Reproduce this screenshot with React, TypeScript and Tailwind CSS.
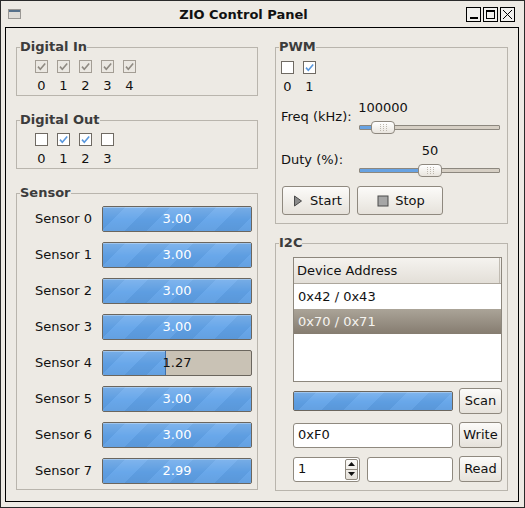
import React from "react";

const STRIPES =
  "bg-[linear-gradient(to_bottom,rgba(255,255,255,0.16),rgba(255,255,255,0)_55%,rgba(0,0,0,0.04)),repeating-linear-gradient(135deg,#5d9de1_0px,#5d9de1_16px,#68a7ea_16px,#68a7ea_32px)]";

function Check({ checked, disabled }: { checked?: boolean; disabled?: boolean }) {
  return (
    <span
      className={`flex h-[13px] w-[13px] items-center justify-center border ${
        disabled ? "border-[#a39d94] bg-[#ebe8e2]" : "border-[#6f6a63] bg-white"
      }`}
    >
      {checked && (
        <svg width="11" height="11" viewBox="0 0 11 11">
          <path
            d="M2 5.6 L4.3 8.2 L9.2 2.4"
            fill="none"
            stroke={disabled ? "#8f8a82" : "#5a98dd"}
            strokeWidth="1.6"
          />
        </svg>
      )}
    </span>
  );
}

function Group({ title, children, className = "" }: { title: string; children: React.ReactNode; className?: string }) {
  return (
    <fieldset className={`border border-[#b9b5ad] ${className}`}>
      <legend className="ml-[3px] text-[13px] font-bold leading-[16px] text-[#3c3c3c]">{title}</legend>
      {children}
    </fieldset>
  );
}

function Bits({ states, disabled }: { states: boolean[]; disabled?: boolean }) {
  return (
    <div className="flex gap-[9px]">
      {states.map((s, i) => (
        <div key={i} className="flex w-[13px] flex-col items-center">
          <Check checked={s} disabled={disabled} />
          <span className="mt-[5px] leading-[16px]">{i}</span>
        </div>
      ))}
    </div>
  );
}

function Bar({ value, max = 3, text = true, className = "" }: { value: number; max?: number; text?: boolean; className?: string }) {
  const pct = Math.min(1, value / max);
  const partial = pct < 0.99;
  return (
    <div
      className={`relative flex items-center justify-center overflow-hidden rounded-[2px] border border-[#6b665e] bg-[#c9c2b5] ${className}`}
    >
      <div
        className={`absolute inset-y-0 left-0 shadow-[inset_0_1px_0_rgba(255,255,255,0.3)] ${STRIPES} ${
          partial ? "border-r border-[#3f6fa8]" : ""
        }`}
        style={{ width: `${pct * 100}%` }}
      />
      {text && (
        <span className={`relative ${pct > 0.6 ? "text-white" : "text-[#111]"}`}>{value.toFixed(2)}</span>
      )}
    </div>
  );
}

function Grip() {
  const dots = [];
  for (let r = 0; r < 4; r++)
    for (let c = 0; c < 3; c++) dots.push(<rect key={`${r}-${c}`} x={c * 3} y={r * 2} width="1" height="1" fill="#bdb7ad" />);
  return (
    <svg width="7" height="7" viewBox="0 0 7 7">
      {dots}
    </svg>
  );
}

function Slider({ value, min, max }: { value: number; min: number; max: number }) {
  const f = (value - min) / (max - min);
  const left = Math.round(f * (141 - 24));
  return (
    <div className="flex flex-col">
      <div className="relative h-[16px]">
        <span className="absolute top-0 -translate-x-1/2 whitespace-nowrap" style={{ left: left + 12 }}>
          {value}
        </span>
      </div>
      <div className="relative mt-[5px] flex h-[13px] items-center">
        <div className="h-[5px] w-full overflow-hidden rounded-[1px] border border-[#8c877e] bg-[#d6cfc4]">
          <div className="h-full border-r border-[#3f6fa8] bg-[#67a2e2]" style={{ width: left + 12 }} />
        </div>
        <div
          className="absolute top-0 flex h-[13px] w-[24px] items-center justify-center rounded-[4px] border border-[#8e887f] bg-[linear-gradient(to_bottom,#ffffff,#e9e5de)]"
          style={{ left }}
        >
          <Grip />
        </div>
      </div>
    </div>
  );
}

function Btn({ children, className = "" }: { children: React.ReactNode; className?: string }) {
  return (
    <button
      className={`flex items-center justify-center rounded-[3px] border border-[#8f897f] bg-[linear-gradient(to_bottom,#fcfbf9,#e6e2db)] text-[13px] leading-[16px] text-[#111] ${className}`}
    >
      {children}
    </button>
  );
}

function TitleBar() {
  return (
    <div className="flex h-[26px] shrink-0 items-center pl-[7px] pr-[9px]">
      <svg width="13" height="10" viewBox="0 0 13 10" className="shrink-0">
        <rect x="0.5" y="0.5" width="12" height="9" fill="#dedbd6" stroke="#9a9894" />
        <rect x="1" y="1" width="11" height="2" fill="#56708a" />
      </svg>
      <div className="flex-1 pt-[2px] text-center text-[13px] font-bold leading-[16px] text-[#111]">ZIO Control Panel</div>
      <div className="flex gap-[2px]">
        <span className="flex h-[15px] w-[15px] items-end justify-center border border-black bg-[#f2f1ee] pb-[2px]">
          <span className="h-[2px] w-[8px] bg-black" />
        </span>
        <span className="flex h-[15px] w-[15px] items-center justify-center border border-black bg-[#f2f1ee]">
          <span className="h-[9px] w-[9px] border border-t-2 border-black" />
        </span>
        <span className="flex h-[15px] w-[15px] items-center justify-center border border-black bg-[#f2f1ee]">
          <svg width="11" height="11" viewBox="0 0 11 11">
            <path d="M1 1 L10 10 M10 1 L1 10" stroke="#000" strokeWidth="1" />
          </svg>
        </span>
      </div>
    </div>
  );
}

export default function App() {
  const sensors = [3.0, 3.0, 3.0, 3.0, 1.27, 3.0, 3.0, 2.99];
  return (
    <div className="flex h-[508px] w-[525px] flex-col border border-[#2a2a2a] bg-[#edeae4] font-['DejaVu_Sans','Liberation_Sans',sans-serif] text-[13px] leading-[16px] text-[#111]">
      <TitleBar />
      <div className="mb-[5px] ml-[4px] mr-[5px] flex flex-1 gap-[17px] border border-black px-[10px] pt-[11px]">
        {/* left column */}
        <div className="flex w-[242px] flex-col gap-[16px]">
          <Group title="Digital In">
            <div className="pb-[1px] pl-[18px] pt-[5px]">
              <Bits states={[true, true, true, true, true]} disabled />
            </div>
          </Group>
          <Group title="Digital Out">
            <div className="pb-[1px] pl-[18px] pt-[5px]">
              <Bits states={[false, true, true, false]} />
            </div>
          </Group>
          <Group title="Sensor">
            <div className="flex flex-col gap-[10px] pb-[5px] pl-[18px] pr-[5px] pt-[5px]">
              {sensors.map((v, i) => (
                <div key={i} className="flex items-center">
                  <span className="w-[67px]">Sensor {i}</span>
                  <Bar value={v} className="h-[26px] flex-1" />
                </div>
              ))}
            </div>
          </Group>
        </div>

        {/* right column */}
        <div className="flex w-[233px] flex-col gap-[11px]">
          <Group title="PWM">
            <div className="flex flex-col pb-[8px] pl-[5px] pr-[7px] pt-[6px]">
              <div className="flex gap-[9px]">
                {[false, true].map((s, i) => (
                  <div key={i} className="flex w-[13px] flex-col items-center">
                    <Check checked={s} />
                    <span className="mt-[5px] leading-[16px]">{i}</span>
                  </div>
                ))}
              </div>
              <div className="mt-[5px] grid grid-cols-[78px_141px] items-center gap-y-[9px]">
                <span>Freq (kHz):</span>
                <Slider value={100000} min={0} max={1000000} />
                <span>Duty (%):</span>
                <Slider value={50} min={0} max={100} />
              </div>
              <div className="ml-[1px] mt-[9px] flex gap-[7px]">
                <Btn className="h-[29px] w-[68px] gap-[4px]">
                  <svg width="16" height="16" viewBox="0 0 16 16">
                    <polygon points="4.5,3 11.5,8 4.5,13" fill="#8a8a8a" stroke="#4a4a4a" strokeWidth="1" />
                  </svg>
                  Start
                </Btn>
                <Btn className="h-[29px] w-[86px] gap-[4px]">
                  <svg width="16" height="16" viewBox="0 0 16 16">
                    <rect x="3" y="3" width="10" height="10" fill="#a6a6a6" stroke="#4a4a4a" strokeWidth="1" />
                  </svg>
                  Stop
                </Btn>
              </div>
            </div>
          </Group>

          <Group title="I2C">
            <div className="flex flex-col gap-[8px] pb-[8px] pl-[17px] pr-[5px] pt-[6px]">
              <div className="mb-[-2px] flex h-[125px] flex-col border border-[#8d877d] bg-white">
                <div className="flex h-[26px] shrink-0 border-b border-[#aca69c] bg-[linear-gradient(to_bottom,#f5f3ef,#e3dfd8)]">
                  <span className="mr-[1px] flex flex-1 items-center border-r border-[#c0bbb2] pl-[3px]">Device Address</span>
                </div>
                <div className="flex h-[25px] shrink-0 items-center pl-[4px]">0x42 / 0x43</div>
                <div className="flex h-[25px] shrink-0 items-center bg-[linear-gradient(to_bottom,#aba498,#857c70)] pl-[4px] text-[#f6f4f0]">
                  0x70 / 0x71
                </div>
              </div>
              <div className="flex h-[26px] items-center gap-[6px]">
                <Bar value={3} text={false} className="h-[20px] w-[160px]" />
                <Btn className="h-[26px] w-[43px]">Scan</Btn>
              </div>
              <div className="flex h-[26px] items-center gap-[6px]">
                <div className="flex h-[25px] w-[160px] items-center rounded-[3px] border border-[#8f897f] bg-white pl-[4px]">0xF0</div>
                <Btn className="h-[26px] w-[43px]">Write</Btn>
              </div>
              <div className="flex h-[26px] items-center gap-[6px]">
                <div className="flex h-[25px] w-[67px] items-stretch overflow-hidden rounded-[3px] border border-[#8f897f] bg-white">
                  <span className="flex flex-1 items-center pl-[4px]">1</span>
                  <div className="my-[1px] mr-[1px] flex w-[13px] flex-col rounded-[2px] border border-[#8f897f] bg-[linear-gradient(to_bottom,#fbfaf8,#e4e0d9)]">
                    <div className="flex flex-1 items-center justify-center border-b border-[#8f897f]">
                      <svg width="7" height="4" viewBox="0 0 7 4">
                        <polygon points="0,4 3.5,0 7,4" fill="#111" />
                      </svg>
                    </div>
                    <div className="flex flex-1 items-center justify-center">
                      <svg width="7" height="4" viewBox="0 0 7 4">
                        <polygon points="0,0 3.5,4 7,0" fill="#111" />
                      </svg>
                    </div>
                  </div>
                </div>
                <div className="ml-[1px] h-[25px] w-[86px] rounded-[3px] border border-[#8f897f] bg-white" />
                <Btn className="h-[26px] w-[43px]">Read</Btn>
              </div>
            </div>
          </Group>
        </div>
      </div>
    </div>
  );
}
